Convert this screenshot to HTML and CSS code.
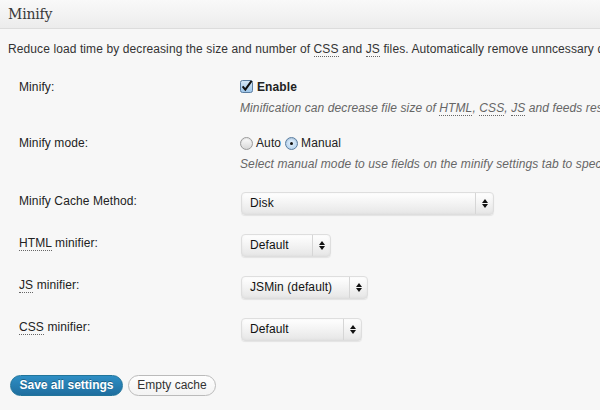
FILE: index.html
```html
<!DOCTYPE html>
<html>
<head>
<meta charset="utf-8">
<link rel="stylesheet" href="styles.css">
</head>
<body>
<div class="page">
  <div class="header"><h3 class="title">Minify</h3></div>
  <p class="intro">Reduce load time by decreasing the size and number of <abbr class="ab">CSS</abbr> and <abbr class="ab">JS</abbr> files. Automatically remove unncessary data from CSS, JS, feed, page and post HTML.</p>

  <div class="form">
    <div class="row row-text">
      <div class="label">Minify:</div>
      <div class="control">
        <div class="line">
          <svg class="cb" width="13" height="13" viewBox="0 0 13 13">
            <defs><linearGradient id="cbg" x1="0" y1="0" x2="0" y2="1"><stop offset="0" stop-color="#d6e8f7"/><stop offset="1" stop-color="#9cc4e8"/></linearGradient></defs>
            <rect x="0.5" y="0.5" width="12" height="12" rx="2" fill="url(#cbg)" stroke="#5a7da0"/>
            <path d="M2.6 6.4 L5.3 9.6 L11.6 0.8" fill="none" stroke="#111" stroke-width="2"/>
          </svg>
          <span class="strong">Enable</span>
        </div>
        <div class="desc">Minification can decrease file size of <abbr class="ab">HTML</abbr>, <abbr class="ab">CSS</abbr>, <abbr class="ab">JS</abbr> and feeds respectively by ~10% on average.</div>
      </div>
    </div>

    <div class="row row-text">
      <div class="label">Minify mode:</div>
      <div class="control">
        <div class="line">
          <span class="radio"></span><span class="opt">Auto</span>
          <span class="radio on"></span><span class="opt">Manual</span>
        </div>
        <div class="desc">Select manual mode to use fields on the minify settings tab to specify files to be minified.</div>
      </div>
    </div>

    <div class="row row-sel">
      <div class="label">Minify Cache Method:</div>
      <div class="control">
        <div class="select w-disk"><span class="val">Disk</span><span class="arr"><i class="up"></i><i class="dn"></i></span></div>
      </div>
    </div>

    <div class="row row-sel">
      <div class="label"><abbr class="ab">HTML</abbr> minifier:</div>
      <div class="control">
        <div class="select w-html"><span class="val">Default</span><span class="arr"><i class="up"></i><i class="dn"></i></span></div>
      </div>
    </div>

    <div class="row row-sel">
      <div class="label"><abbr class="ab">JS</abbr> minifier:</div>
      <div class="control">
        <div class="select w-js"><span class="val">JSMin (default)</span><span class="arr"><i class="up"></i><i class="dn"></i></span></div>
      </div>
    </div>

    <div class="row row-sel">
      <div class="label"><abbr class="ab">CSS</abbr> minifier:</div>
      <div class="control">
        <div class="select w-css"><span class="val">Default</span><span class="arr"><i class="up"></i><i class="dn"></i></span></div>
      </div>
    </div>
  </div>

  <div class="buttons">
    <button class="btn primary">Save all settings</button>
    <button class="btn secondary">Empty cache</button>
  </div>
</div>
</body>
</html>
```

FILE: styles.css
```css
html, body {
  margin: 0;
  padding: 0;
  background: #f7f7f7;
  width: 600px;
  height: 410px;
  overflow: hidden;
}
.page {
  width: 600px;
  overflow: hidden;
  font-family: "Liberation Sans", Arial, sans-serif;
  font-size: 12px;
  letter-spacing: 0.1px;
  color: #333;
  white-space: nowrap;
}
.header {
  height: 28px;
  border-bottom: 1px solid #dcdcdc;
  background: linear-gradient(#f9f9f9, #ececec);
  display: flex;
  align-items: center;
  padding-left: 8px;
}
.title {
  margin: 0;
  font-family: "DejaVu Serif", Georgia, serif;
  font-weight: normal;
  font-size: 14px;
  color: #3a3a3a;
  letter-spacing: -0.2px;
}
.intro {
  margin: 0;
  padding: 11px 8px 0 8px;
  line-height: 18px;
  height: 29px;
  color: #333;
}
.ab {
  text-decoration: none;
  border-bottom: 1px dotted #666;
}
.form {
  display: flex;
  flex-direction: column;
}
.row {
  display: grid;
  grid-template-columns: 240px 1fr;
}
.label {
  padding-left: 19px;
  line-height: 20px;
  color: #222;
}
.row-text {
  padding: 8px 0 7px 0;
}
.row-sel {
  padding: 11px 0 8px 0;
}
.row-sel .label {
  line-height: 19px;
}
.control {
  display: flex;
  flex-direction: column;
}
.line {
  display: flex;
  align-items: center;
  height: 20px;
}
.cb {
  margin-right: 4px;
  margin-top: -2px;
}
.strong {
  font-weight: bold;
  color: #222;
}
.desc {
  font-style: italic;
  color: #666;
  line-height: 20px;
  padding-top: 1px;
}
.radio {
  width: 13px;
  height: 13px;
  border-radius: 50%;
  box-sizing: border-box;
  border: 1px solid #9a9a9a;
  background: linear-gradient(#fdfdfd, #d8d8d8);
  margin-right: 3px;
  position: relative;
  box-shadow: inset 0 1px 1px rgba(0,0,0,0.1);
}
.radio.on {
  border-color: #5a7da0;
  background: radial-gradient(circle at 50% 45%, #e6f1fb 0, #a8cbeb 100%);
  margin-left: 4px;
}
.radio.on::after {
  content: "";
  position: absolute;
  left: 4px;
  top: 4px;
  width: 3px;
  height: 3px;
  border-radius: 50%;
  background: #111;
}
.opt {
  color: #222;
}
.select {
  box-sizing: border-box;
  height: 23px;
  margin-left: 1px;
  border: 1px solid #dedede;
  border-radius: 4px;
  background: linear-gradient(#ffffff 0%, #f3f3f3 50%, #e6e6e6 100%);
  box-shadow: 0 1px 1px rgba(0,0,0,0.08), inset 0 0 3px rgba(0,0,0,0.05);
  display: flex;
  align-items: center;
  color: #111;
}
.val {
  flex: 1;
  padding-left: 8px;
  line-height: 21px;
}
.arr {
  width: 17px;
  height: 21px;
  border-left: 1px solid #d6d6d6;
  display: flex;
  flex-direction: column;
  align-items: center;
  justify-content: center;
  gap: 1px;
}
.arr i {
  display: block;
  width: 0;
  height: 0;
  border-left: 3px solid transparent;
  border-right: 3px solid transparent;
}
.arr .up { border-bottom: 4px solid #111; }
.arr .dn { border-top: 4px solid #111; }
.w-disk { width: 253px; }
.w-html { width: 90px; }
.w-js { width: 127px; }
.w-css { width: 121px; }
.buttons {
  display: flex;
  gap: 5px;
  padding: 26px 0 0 10px;
}
.btn {
  font-family: "Liberation Sans", Arial, sans-serif;
  font-size: 12px;
  height: 21px;
  line-height: 19px;
  border-radius: 11px;
  padding: 0 8px;
  margin: 0;
  cursor: pointer;
}
.primary {
  font-weight: bold;
  color: #fff;
  border: 1px solid #21759b;
  background: linear-gradient(#2e8ec4, #1f6e9f);
  text-shadow: 0 -1px 0 rgba(0,0,0,0.3);
  width: 113px;
}
.secondary {
  color: #333;
  border: 1px solid #bbb;
  background: linear-gradient(#fefefe, #f3f3f3);
  width: 88px;
}
```
